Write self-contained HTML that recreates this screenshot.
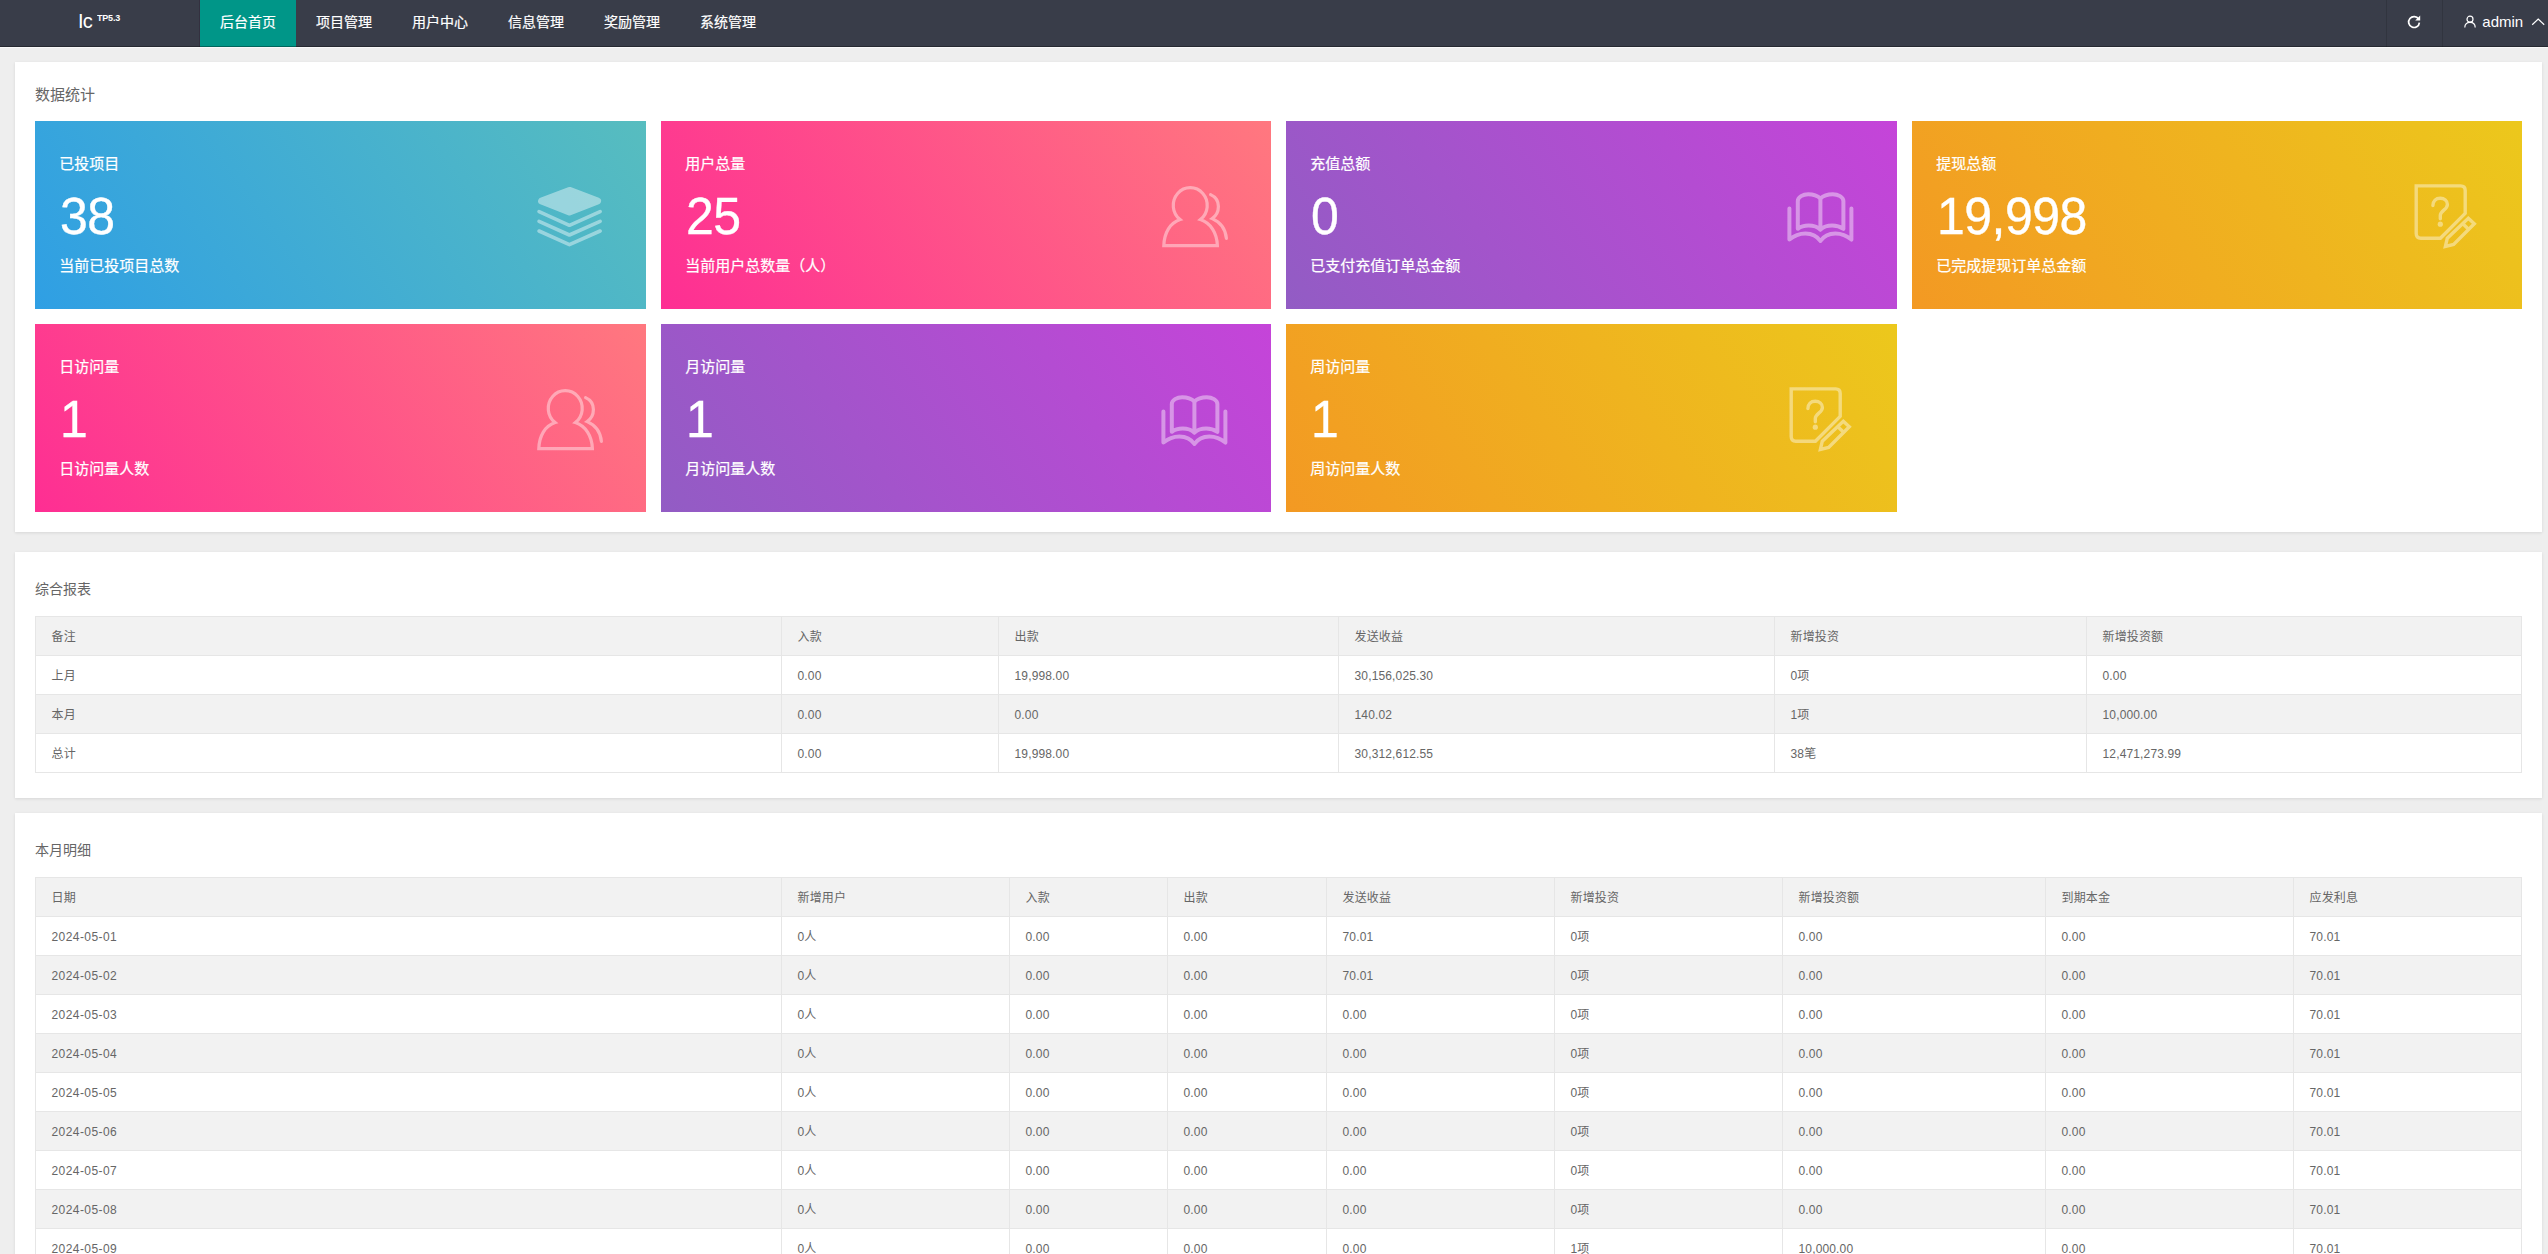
<!DOCTYPE html>
<html lang="zh-CN">
<head>
<meta charset="utf-8">
<title>后台首页</title>
<style>
*{box-sizing:border-box}
html,body{margin:0;padding:0}
body{width:2548px;height:1254px;overflow:hidden;background:#eee;position:relative;
 font-family:"Liberation Sans","Noto Sans CJK SC",sans-serif;color:#666;font-size:14px}
.hd{position:absolute;left:0;top:0;width:2548px;height:47px;background:#393d49;z-index:5}
.hd:after{content:"";position:absolute;left:0;top:46px;width:2548px;height:1px;background:rgba(0,0,0,.32)}
.hl{position:absolute;left:0;top:47px;width:2548px;height:1px;background:#f9f9f9}
.logo{position:absolute;left:78px;top:9px;color:#fff;font-size:20px;line-height:24px;white-space:nowrap;letter-spacing:-.8px}
.logo sup{position:absolute;left:19px;top:2.2px;font-size:9px;line-height:12px;font-weight:bold;letter-spacing:-.2px;transform:scaleY(1.06);transform-origin:0 0}
.nav{position:absolute;left:200px;top:0;height:47px;display:flex}
.nav div{width:96px;height:47px;line-height:45px;text-align:center;color:#fff;font-size:14px;-webkit-text-stroke:.2px #fff}
.nav .on{background:#009688}
.sep{position:absolute;top:0;width:1px;height:47px;background:#31353f}
.adm{position:absolute;left:2482.3px;top:0;line-height:44px;color:#fff;font-size:15px}
.pn{position:absolute;left:15px;width:2527px;background:#fff;box-shadow:0 1px 3px 0 rgba(0,0,0,.1)}
.tt{position:absolute;left:20px;color:#666;font-size:14px;line-height:20px;white-space:nowrap}
.card{position:absolute;height:188px;color:#fff}
.c-blue{background:linear-gradient(55deg,#2f9fe4,#57bdbf)}
.c-pink{background:linear-gradient(55deg,#fe2e93,#ff787f)}
.c-purple{background:linear-gradient(55deg,#925cc4,#c544d9)}
.c-orange{background:linear-gradient(55deg,#f39923,#ecc81c)}
.ct,.cs{position:absolute;left:24.3px;font-size:15px;line-height:20px;white-space:nowrap;-webkit-text-stroke:.22px #fff}
.ct{top:33px}
.cs{top:135px}
.cn{position:absolute;left:25px;top:65.8px;font-size:50px;line-height:60px;letter-spacing:-.5px;white-space:nowrap;transform:scaleY(1.02);transform-origin:0 100%;-webkit-text-stroke:.35px #fff}
.ic{position:absolute;right:16px;top:49px;opacity:.42}
.tb{position:absolute;left:20px;border-collapse:collapse;table-layout:fixed;width:2486px;font-size:12px;color:#666}
.tb th,.tb td{border:1px solid #e6e6e6;padding:10px 15px 8px 15.5px;letter-spacing:.15px;height:39px;line-height:20px;text-align:left;font-weight:normal;white-space:nowrap;overflow:hidden}
.tb thead tr,.tb tbody tr:nth-child(even){background:#f2f2f2}
.t2 td:first-child{letter-spacing:.42px}
</style>
</head>
<body>
<div class="hd">
<div class="logo">Ic<sup>TP5.3</sup></div>
<div class="nav"><div class="on">后台首页</div><div>项目管理</div><div>用户中心</div><div>信息管理</div><div>奖励管理</div><div>系统管理</div></div>
<div class="sep" style="left:2386px"></div><div class="sep" style="left:2442px"></div>
<svg style="position:absolute;left:2405px;top:12.7px" width="18" height="18" viewBox="0 0 18 18"><path d="M13.6 6.2 A5.4 5.4 0 1 0 14.4 9.6" fill="none" stroke="#fff" stroke-width="1.7"/><path d="M15.2 2.6 L15.2 7.6 L10.2 7.6 Z" fill="#fff"/></svg>
<svg style="position:absolute;left:2462px;top:14px" width="16" height="16" viewBox="0 0 16 16"><circle cx="8" cy="5.2" r="3" fill="none" stroke="#fff" stroke-width="1.2"/><path d="M2.8 13.6 C2.8 10 5 8.4 8 8.4 C11 8.4 13.2 10 13.2 13.6" fill="none" stroke="#fff" stroke-width="1.2"/></svg>
<div class="adm">admin</div>
<svg style="position:absolute;left:2529px;top:15px" width="19" height="12" viewBox="0 0 19 12"><path d="M3.2 9.7 L9.2 4 L15.2 9.7" fill="none" stroke="#fff" stroke-width="1.2"/></svg>
<div class="sep" style="left:199px;background:#34303f"></div>
</div>
<div class="hl"></div>

<div class="pn" style="top:62px;height:470px"><div class="tt" style="top:23px;font-size:15px">数据统计</div></div>
<div class="card c-blue" style="left:35px;top:121px;width:611px">
<div class="ct">已投项目</div><div class="cn">38</div><div class="cs">当前已投项目总数</div>
<svg class="ic" style="right:16px" width="120" height="90" viewBox="0 0 120 90"><g fill="none" stroke="#fff" stroke-linecap="round" stroke-linejoin="round">
<path d="M59.4 20.4 L87.6 31 L59.4 41.9 L31.6 31 Z" fill="#fff" stroke-width="7"/>
<path d="M29.1 41.6 L59.4 55.3 L90.1 41.6" stroke-width="3.6"/>
<path d="M29.1 51.3 L59.4 65 L90.1 51.3" stroke-width="3.6"/>
<path d="M29.1 61 L59.4 74.7 L90.1 61" stroke-width="3.6"/>
</g></svg>
</div>
<div class="card c-pink" style="left:661px;top:121px;width:610px">
<div class="ct">用户总量</div><div class="cn">25</div><div class="cs">当前用户总数量（人）</div>
<svg class="ic" style="right:11px" width="120" height="90" viewBox="0 0 120 90"><g fill="none" stroke="#fff" stroke-width="3.2" stroke-linecap="round" stroke-linejoin="miter">
<path d="M40.1 49.6 A17 17.7 0 1 1 60.4 49.6 C70.6 53 77 63 77.4 75.7 L23.8 75.7 C24.2 63 29.9 53 40.1 49.6 Z"/>
<path d="M70.6 24.6 C76 27 78.4 31.5 78.4 36.6 C78.4 42 76 46 72.2 48.6 C80 52 85.6 59 86.4 68.4"/>
</g></svg>
</div>
<div class="card c-purple" style="left:1286px;top:121px;width:611px">
<div class="ct">充值总额</div><div class="cn">0</div><div class="cs">已支付充值订单总金额</div>
<svg class="ic" style="right:12px" width="120" height="90" viewBox="0 0 120 90"><g fill="none" stroke="#fff" stroke-width="4" stroke-linecap="round" stroke-linejoin="round">
<path d="M55.4 28.4 C52 25.2 47.6 24.2 43.2 24.2 C38 24.2 32.8 27 32.8 31 L32.8 58.8 C36 56.4 40 55.6 43.6 55.6 C48 55.6 52.4 56.8 55.4 59.6 C58.4 56.8 62.8 55.6 67.2 55.6 C70.8 55.6 74.8 56.4 78.4 58.8 L78.4 31 C78.4 27 73 24.2 67.8 24.2 C63.4 24.2 58.8 25.2 55.4 28.4 Z"/>
<path d="M55.4 28.4 L55.4 59.6"/>
<path d="M24.4 38.4 L24.4 69.6 C29 65.6 34.6 63.4 40.4 63.4 C46.4 63.4 52 65.8 55.4 71 C58.8 65.8 64.4 63.4 70.4 63.4 C76.2 63.4 81.8 65.6 86.4 69.6 L86.4 38.4"/>
</g></svg>
</div>
<div class="card c-orange" style="left:1912px;top:121px;width:610px">
<div class="ct">提现总额</div><div class="cn">19,998</div><div class="cs">已完成提现订单总金额</div>
<svg class="ic" style="right:12px" width="120" height="90" viewBox="0 0 120 90"><g fill="none" stroke="#fff" stroke-width="3.4" stroke-linecap="butt" stroke-linejoin="miter">
<path d="M26.2 15.9 L70.6 15.9 Q75.2 15.9 75.2 20.5 L75.2 43.4 L50.4 68.2 L30.8 68.2 Q26.2 68.2 26.2 63.6 Z"/>
<path d="M42.9 35.6 C42.9 31 46 28.2 50.2 28.2 C54.4 28.2 57.4 30.8 57.4 34.4 C57.4 39.6 50.3 40.6 50.3 45.6 L50.3 48.8" stroke-linecap="round"/>
<circle cx="50.3" cy="54.2" r="2.6" fill="#fff" stroke="none"/>
<path d="M78.3 48.3 L84.3 53.8 L63.6 74.4 L55.4 76.4 L57.3 68.2 Z"/>
<path d="M72.6 53.6 L78.6 59.2"/>
</g></svg>
</div>
<div class="card c-pink" style="left:35px;top:324px;width:611px">
<div class="ct">日访问量</div><div class="cn">1</div><div class="cs">日访问量人数</div>
<svg class="ic" style="right:11px" width="120" height="90" viewBox="0 0 120 90"><g fill="none" stroke="#fff" stroke-width="3.2" stroke-linecap="round" stroke-linejoin="miter">
<path d="M40.1 49.6 A17 17.7 0 1 1 60.4 49.6 C70.6 53 77 63 77.4 75.7 L23.8 75.7 C24.2 63 29.9 53 40.1 49.6 Z"/>
<path d="M70.6 24.6 C76 27 78.4 31.5 78.4 36.6 C78.4 42 76 46 72.2 48.6 C80 52 85.6 59 86.4 68.4"/>
</g></svg>
</div>
<div class="card c-purple" style="left:661px;top:324px;width:610px">
<div class="ct">月访问量</div><div class="cn">1</div><div class="cs">月访问量人数</div>
<svg class="ic" style="right:12px" width="120" height="90" viewBox="0 0 120 90"><g fill="none" stroke="#fff" stroke-width="4" stroke-linecap="round" stroke-linejoin="round">
<path d="M55.4 28.4 C52 25.2 47.6 24.2 43.2 24.2 C38 24.2 32.8 27 32.8 31 L32.8 58.8 C36 56.4 40 55.6 43.6 55.6 C48 55.6 52.4 56.8 55.4 59.6 C58.4 56.8 62.8 55.6 67.2 55.6 C70.8 55.6 74.8 56.4 78.4 58.8 L78.4 31 C78.4 27 73 24.2 67.8 24.2 C63.4 24.2 58.8 25.2 55.4 28.4 Z"/>
<path d="M55.4 28.4 L55.4 59.6"/>
<path d="M24.4 38.4 L24.4 69.6 C29 65.6 34.6 63.4 40.4 63.4 C46.4 63.4 52 65.8 55.4 71 C58.8 65.8 64.4 63.4 70.4 63.4 C76.2 63.4 81.8 65.6 86.4 69.6 L86.4 38.4"/>
</g></svg>
</div>
<div class="card c-orange" style="left:1286px;top:324px;width:611px">
<div class="ct">周访问量</div><div class="cn">1</div><div class="cs">周访问量人数</div>
<svg class="ic" style="right:12px" width="120" height="90" viewBox="0 0 120 90"><g fill="none" stroke="#fff" stroke-width="3.4" stroke-linecap="butt" stroke-linejoin="miter">
<path d="M26.2 15.9 L70.6 15.9 Q75.2 15.9 75.2 20.5 L75.2 43.4 L50.4 68.2 L30.8 68.2 Q26.2 68.2 26.2 63.6 Z"/>
<path d="M42.9 35.6 C42.9 31 46 28.2 50.2 28.2 C54.4 28.2 57.4 30.8 57.4 34.4 C57.4 39.6 50.3 40.6 50.3 45.6 L50.3 48.8" stroke-linecap="round"/>
<circle cx="50.3" cy="54.2" r="2.6" fill="#fff" stroke="none"/>
<path d="M78.3 48.3 L84.3 53.8 L63.6 74.4 L55.4 76.4 L57.3 68.2 Z"/>
<path d="M72.6 53.6 L78.6 59.2"/>
</g></svg>
</div>

<div class="pn" style="top:552px;height:246px"><div class="tt" style="top:27px">综合报表</div>
<div style="position:absolute;left:0;top:64px"><table class="tb"><colgroup><col style="width:746px"><col style="width:217px"><col style="width:340px"><col style="width:436px"><col style="width:312px"><col style="width:435px"></colgroup>
<thead><tr><th>备注</th><th>入款</th><th>出款</th><th>发送收益</th><th>新增投资</th><th>新增投资额</th></tr></thead>
<tbody>
<tr><td>上月</td><td>0.00</td><td>19,998.00</td><td>30,156,025.30</td><td>0项</td><td>0.00</td></tr>
<tr><td>本月</td><td>0.00</td><td>0.00</td><td>140.02</td><td>1项</td><td>10,000.00</td></tr>
<tr><td>总计</td><td>0.00</td><td>19,998.00</td><td>30,312,612.55</td><td>38笔</td><td>12,471,273.99</td></tr>
</tbody></table></div></div>

<div class="pn" style="top:813px;height:520px"><div class="tt" style="top:27px">本月明细</div>
<div style="position:absolute;left:0;top:64px"><table class="tb t2"><colgroup><col style="width:746px"><col style="width:228px"><col style="width:158px"><col style="width:159px"><col style="width:228px"><col style="width:228px"><col style="width:263px"><col style="width:248px"><col style="width:228px"></colgroup>
<thead><tr><th>日期</th><th>新增用户</th><th>入款</th><th>出款</th><th>发送收益</th><th>新增投资</th><th>新增投资额</th><th>到期本金</th><th>应发利息</th></tr></thead>
<tbody>
<tr><td>2024-05-01</td><td>0人</td><td>0.00</td><td>0.00</td><td>70.01</td><td>0项</td><td>0.00</td><td>0.00</td><td>70.01</td></tr>
<tr><td>2024-05-02</td><td>0人</td><td>0.00</td><td>0.00</td><td>70.01</td><td>0项</td><td>0.00</td><td>0.00</td><td>70.01</td></tr>
<tr><td>2024-05-03</td><td>0人</td><td>0.00</td><td>0.00</td><td>0.00</td><td>0项</td><td>0.00</td><td>0.00</td><td>70.01</td></tr>
<tr><td>2024-05-04</td><td>0人</td><td>0.00</td><td>0.00</td><td>0.00</td><td>0项</td><td>0.00</td><td>0.00</td><td>70.01</td></tr>
<tr><td>2024-05-05</td><td>0人</td><td>0.00</td><td>0.00</td><td>0.00</td><td>0项</td><td>0.00</td><td>0.00</td><td>70.01</td></tr>
<tr><td>2024-05-06</td><td>0人</td><td>0.00</td><td>0.00</td><td>0.00</td><td>0项</td><td>0.00</td><td>0.00</td><td>70.01</td></tr>
<tr><td>2024-05-07</td><td>0人</td><td>0.00</td><td>0.00</td><td>0.00</td><td>0项</td><td>0.00</td><td>0.00</td><td>70.01</td></tr>
<tr><td>2024-05-08</td><td>0人</td><td>0.00</td><td>0.00</td><td>0.00</td><td>0项</td><td>0.00</td><td>0.00</td><td>70.01</td></tr>
<tr><td>2024-05-09</td><td>0人</td><td>0.00</td><td>0.00</td><td>0.00</td><td>1项</td><td>10,000.00</td><td>0.00</td><td>70.01</td></tr>
<tr><td>2024-05-10</td><td>0人</td><td>0.00</td><td>0.00</td><td>0.00</td><td>0项</td><td>0.00</td><td>0.00</td><td>70.01</td></tr>
</tbody></table></div></div>
</body>
</html>
